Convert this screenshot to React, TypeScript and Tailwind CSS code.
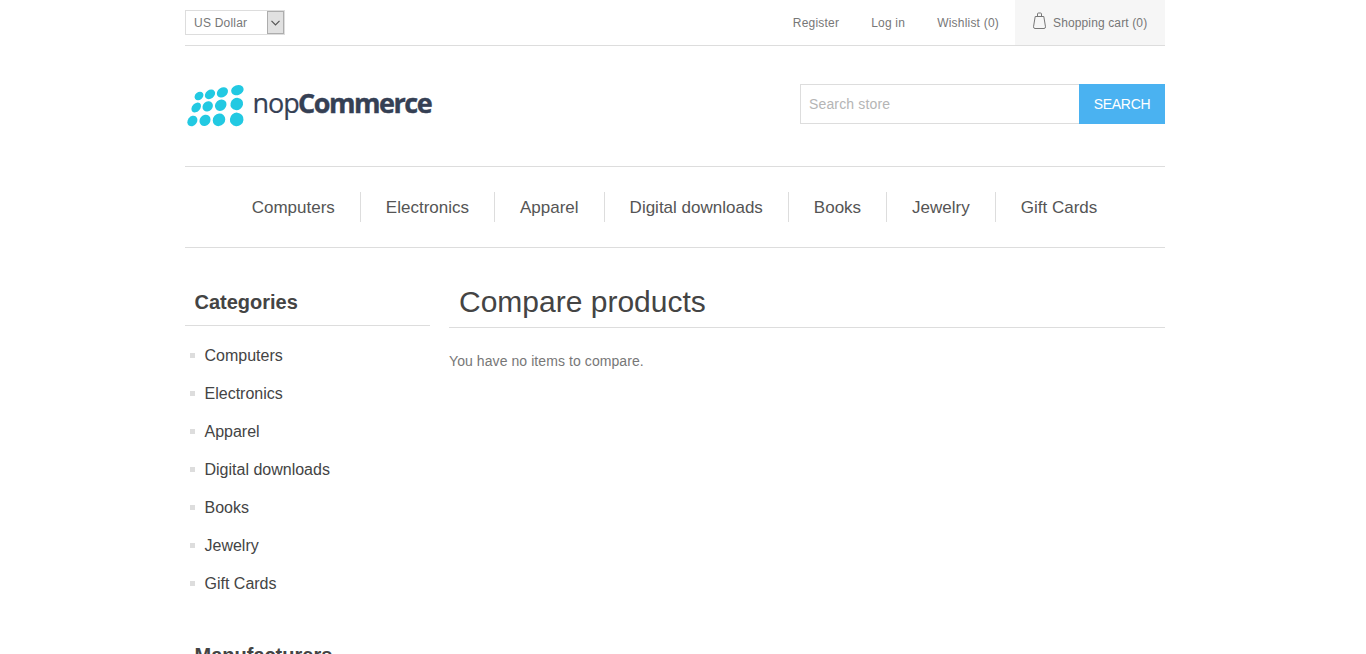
const categories = [
  'Computers',
  'Electronics',
  'Apparel',
  'Digital downloads',
  'Books',
  'Jewelry',
  'Gift Cards',
];

// cx, cy, rx, ry, rotation of each dot in the logo mark
const dots = [
  [14, 21, 4.8, 3.8, -38],
  [25, 19.4, 5.6, 4.3, -38],
  [37.4, 17.4, 6, 4.6, -34],
  [52.4, 15.1, 6.4, 5, -20],
  [11.2, 32.5, 5.6, 4, -48],
  [22.7, 31.4, 5.6, 4.8, -45],
  [35.7, 30.2, 6.2, 5.3, -42],
  [51.8, 29, 6.5, 6, -35],
  [7.4, 46, 5.7, 4.6, -52],
  [20, 45.4, 6, 5.2, -50],
  [34, 44.8, 6.6, 6, -48],
  [51.7, 44.4, 6.9, 6.7, -40],
];

function Logo() {
  return (
    <svg className="overflow-visible" width="252" height="60" viewBox="0 0 252 60" aria-label="nopCommerce">
      <g fill="#22c9e2">
        {dots.map(([cx, cy, rx, ry, angle]) => (
          <ellipse
            key={`${cx}-${cy}`}
            cx={cx}
            cy={cy}
            rx={rx}
            ry={ry}
            transform={`rotate(${angle} ${cx} ${cy})`}
          />
        ))}
      </g>
      <g fill="#354054" fontFamily="'Open Sans', 'Noto Sans', sans-serif" fontSize="27">
        <text x="67.6" y="38" letterSpacing="-1.1" stroke="#354054" strokeWidth=".2">nop</text>
        <text x="112.9" y="38" fontWeight="700" letterSpacing="-1.45" stroke="#354054" strokeWidth=".4">
          Commerce
        </text>
      </g>
    </svg>
  );
}

function BagIcon() {
  return (
    <svg className="mr-[7px] -mt-[4px]" width="13" height="17" viewBox="0 0 13 17" fill="none" stroke="#777" strokeWidth="1">
      <path d="M2.2 4.5H10.8L12.5 14.8Q12.5 16.5 11 16.5H2Q.5 16.5 .5 14.8Z" />
      <path d="M4.5 4.5V2Q4.5 1 5.5 1H7.5Q8.5 1 8.5 2V4.5" />
    </svg>
  );
}

function Heading({ children }: { children: string }) {
  return (
    <h2 className="border-b border-[#ddd] pl-[9.5px] pb-[11px] text-[20px] leading-[23px] font-bold text-[#444]">
      {children}
    </h2>
  );
}

export default function App() {
  return (
    <div className="h-[654px] overflow-hidden bg-white font-['Liberation_Sans',Arial,sans-serif] text-[14px] text-[#777]">
      <div className="ml-[185px] w-[980px]">
        <div className="flex h-[46px] justify-between border-b border-[#ddd] text-[12px] tracking-[0.21px]">
          <div className="mt-[10px] flex h-[25px] w-[100px] border border-[#ddd]">
            <span className="flex-1 pl-2 leading-[25px]">US Dollar</span>
            <span className="flex w-[17px] items-center justify-center border border-[#adadad] bg-[#e1e1e1]">
              <svg width="9" height="6" viewBox="0 0 9 6" fill="none" stroke="#555" strokeWidth="1.2">
                <path d="M.5 .8L4.5 4.8L8.5 .8" />
              </svg>
            </span>
          </div>
          <div className="flex h-[45px] items-center">
            <a className="mr-8">Register</a>
            <a className="mr-8">Log in</a>
            <a className="mr-4">Wishlist (0)</a>
            <a className="flex h-full w-[150px] items-center bg-[#f6f6f6] pl-[18px] tracking-[0.13px]">
              <BagIcon />
              Shopping cart (0)
            </a>
          </div>
        </div>

        <header className="flex h-[120px] justify-between">
          <div className="pt-[29px]">
            <Logo />
          </div>
          <form className="mt-[38px] flex h-10 w-[365px]">
            <input
              className="w-[279px] border border-r-0 border-[#ddd] px-2 tracking-[0.15px] placeholder:text-[#b5b5b5]"
              placeholder="Search store"
            />
            <button type="button" className="w-[86px] bg-[#4ab2f1] tracking-[-0.3px] text-white">
              SEARCH
            </button>
          </form>
        </header>

        <nav className="flex h-[82px] items-center justify-center border-y border-[#ddd] pr-px text-[17px] text-[#555]">
          {categories.map((name) => (
            <a
              key={name}
              className="h-[30px] border-l border-[#ddd] px-[25px] leading-[32px] first:border-l-0"
            >
              {name}
            </a>
          ))}
        </nav>

        <div className="flex justify-between">
          <aside className="w-[245px] pt-[43px]">
            <Heading>Categories</Heading>
            <ul className="mt-[11px] mb-[41px] text-[16px] text-[#444]">
              {categories.map((name) => (
                <li key={name} className="flex h-[38px] items-center pl-[5px]">
                  <span className="mr-[9.5px] mb-[2px] h-[5px] w-[5px] bg-[#ddd]" />
                  {name}
                </li>
              ))}
            </ul>
            <Heading>Manufacturers</Heading>
          </aside>
          <main className="w-[716px] pt-[36px]">
            <h1 className="h-[44px] border-b border-[#ddd] pl-[10px] text-[30px] leading-[36px] text-[#444]">
              Compare products
            </h1>
            <p className="mt-[23px] leading-5 tracking-[0.08px]">You have no items to compare.</p>
          </main>
        </div>
      </div>
    </div>
  );
}
